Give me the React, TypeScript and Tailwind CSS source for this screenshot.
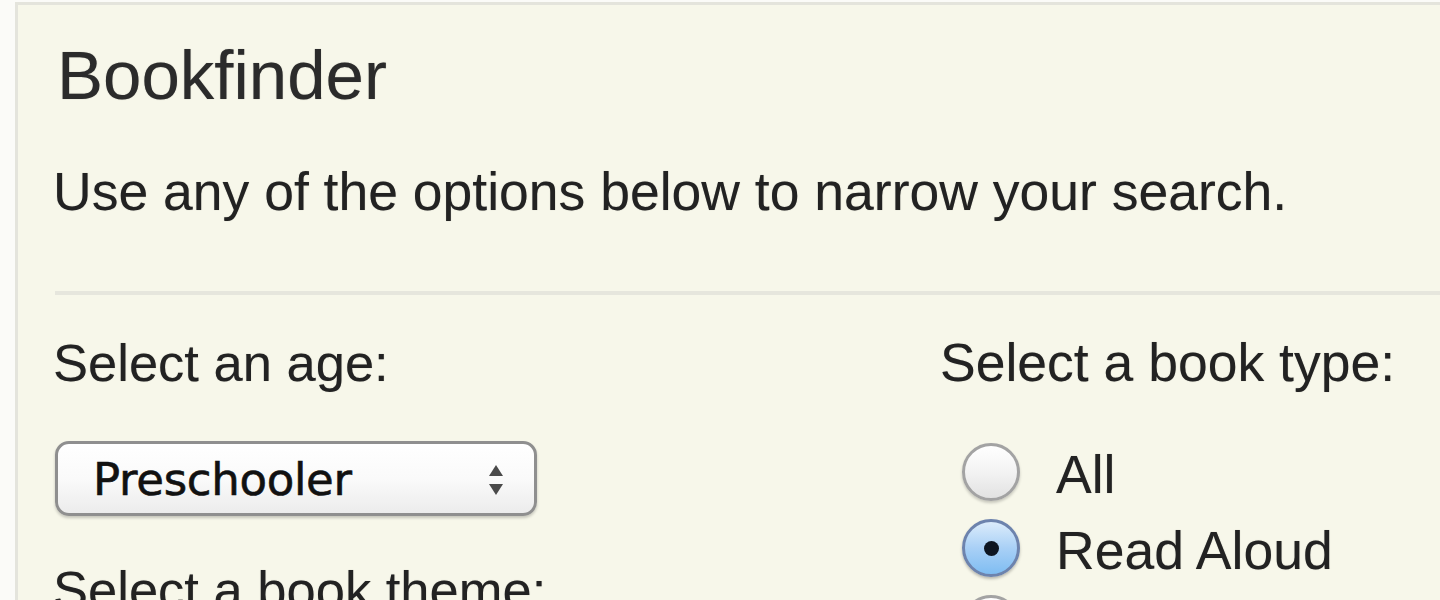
import React from "react";

function Radio({ checked }: { checked?: boolean }) {
  if (checked) {
    return (
      <div className="w-[58px] h-[58px] rounded-full border-[3px] border-[#6d83ad] bg-[linear-gradient(to_bottom,#dcecfb_0%,#a9d0f6_50%,#7fbdf2_100%)] shadow-[0_2px_3px_rgba(0,0,0,0.25)] flex items-center justify-center shrink-0">
        <div className="w-[15px] h-[15px] rounded-full bg-[#0d1622]" />
      </div>
    );
  }
  return (
    <div className="w-[58px] h-[58px] rounded-full border-[3px] border-[#a3a3a3] bg-[linear-gradient(to_bottom,#ffffff_0%,#f3f3f3_50%,#e2e2e2_100%)] shadow-[0_2px_3px_rgba(0,0,0,0.2)] shrink-0" />
  );
}

export default function App() {
  const sans = { fontFamily: '"Liberation Sans", Arial, Helvetica, sans-serif' };
  return (
    <div className="min-h-[600px] h-[600px] overflow-hidden bg-[#fbfbf8] pl-[15px] pt-[2px]" style={sans}>
      <div className="border-t-[3px] border-l-[3px] border-[#e4e4dc] bg-[#f7f7ea] pl-[35px] pt-[31px] h-[700px] text-[#222]">
        <h1 className="ml-[4px] text-[69px] leading-[80px] text-[#2b2b2b] font-normal [text-shadow:0_0_1px_rgba(0,0,0,0.35)]">
          Bookfinder
        </h1>
        <p className="mt-[44px] text-[53.5px] leading-[64px] text-[#222] [text-shadow:0_0_1px_rgba(0,0,0,0.3)]">
          Use any of the options below to narrow your search.
        </p>
        <div className="mt-[67px] h-[4px] bg-[#e6e6dd] ml-[2px]" />
        <div className="flex mt-[36px] [text-shadow:0_0_1px_rgba(0,0,0,0.3)]">
          <div className="w-[887px] shrink-0">
            <div className="text-[52.5px] leading-[64px]">Select an age:</div>
            <div className="mt-[46px] ml-[2px] w-[482px] h-[75px] rounded-[14px] border-[3px] border-[#8f8f8f] bg-[linear-gradient(to_bottom,#ffffff_0%,#fafafa_50%,#ececec_100%)] shadow-[0_2px_3px_rgba(0,0,0,0.2)] flex items-center pl-[35px] pr-[30px] justify-between [text-shadow:none]">
              <span
                className="text-[45px] leading-[56px] text-[#111] pt-[2px] [-webkit-text-stroke:0.6px_#111]"
                style={{ fontFamily: '"DejaVu Sans", Verdana, sans-serif', letterSpacing: "-0.3px" }}
              >
                Preschooler
              </span>
              <svg width="16" height="32" viewBox="0 0 16 32" className="mt-[2px]">
                <polygon points="8,1 15,12 1,12" fill="#4a4a4a" />
                <polygon points="1,20 15,20 8,31" fill="#4a4a4a" />
              </svg>
            </div>
            <div className="mt-[42px] text-[52.5px] leading-[64px]">Select a book theme:</div>
          </div>
          <div className="flex-1">
            <div className="text-[53.5px] leading-[64px]">Select a book type:</div>
            <div className="mt-[39px] flex flex-col">
              {[
                { label: "All", checked: false },
                { label: "Read Aloud", checked: true },
                { label: "Read Alone", checked: false },
              ].map((r) => (
                <div key={r.label} className="h-[76px] flex items-center pl-[22px] gap-[36px]">
                  <Radio checked={r.checked} />
                  <span className="text-[53.5px] leading-[64px] pt-[5px]">{r.label}</span>
                </div>
              ))}
            </div>
          </div>
        </div>
      </div>
    </div>
  );
}
